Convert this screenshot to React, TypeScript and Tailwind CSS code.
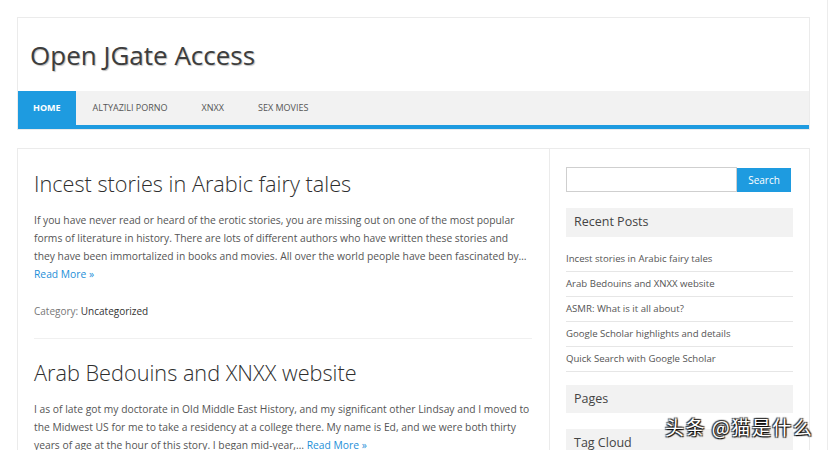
import React from "react";

const FONT = "font-['Open_Sans','DejaVu_Sans',sans-serif]";

const navItems = ["ALTYAZILI PORNO", "XNXX", "SEX MOVIES"];

const recent = [
  "Incest stories in Arabic fairy tales",
  "Arab Bedouins and XNXX website",
  "ASMR: What is it all about?",
  "Google Scholar highlights and details",
  "Quick Search with Google Scholar",
];

function Post({ title, body, readMoreInline, showCategory }: { title: string; body: string; readMoreInline?: boolean; showCategory?: boolean }) {
  return (
    <article>
      <h2 className="text-[21.7px] leading-[30px] font-light text-[#2e2e2e]">{title}</h2>
      <p className="mt-[12px] text-[10.3px] leading-[18px] text-[#555]">
        {body}
        {readMoreInline && <a className="text-[#1e8fd8]"> Read More »</a>}
      </p>
      {!readMoreInline && <p className="text-[10.3px] leading-[18px] text-[#1e8fd8]">Read More »</p>}
      {showCategory && (
        <p className="mt-[19px] text-[10px] leading-[18px] text-[#777]">
          Category: <span className="text-[#333]">Uncategorized</span>
        </p>
      )}
    </article>
  );
}

export default function App() {
  return (
    <div className={`relative w-[830px] h-[450px] overflow-hidden bg-white ${FONT}`}>
      <div className="w-[828px] h-[450px] border-r border-[#ececec] pt-[17px] pl-[17px]">
        {/* header */}
        <header className="w-[793px] border border-[#ebebeb] bg-white">
          <div className="h-[73px] pl-[12px] pt-[20px]">
            <h1 className="text-[26px] leading-[34px] text-[#3d3d3d] [text-shadow:1px_1px_1px_rgba(0,0,0,0.25)]">Open JGate Access</h1>
          </div>
          <nav className="flex h-[38px] bg-[#f2f2f2] border-b-4 border-[#1e9be0]">
            <a className="flex items-center px-[15px] bg-[#1e9be0] text-white text-[9px] font-bold">HOME</a>
            {navItems.map((n) => (
              <a key={n} className="flex items-center px-[17px] text-[9px] text-[#555]">{n}</a>
            ))}
          </nav>
        </header>

        {/* main */}
        <div className="mt-[18px] w-[793px] h-[320px] border border-[#ebebeb] flex">
          <main className="w-[532px] border-r border-[#ebebeb] pl-[16px] pr-[17px] pt-[20px]">
            <div className="w-[494px]">
              <Post
                title="Incest stories in Arabic fairy tales"
                body="If you have never read or heard of the erotic stories, you are missing out on one of the most popular forms of literature in history. There are lots of different authors who have written these stories and they have been immortalized in books and movies. All over the world people have been fascinated by…"
                showCategory
              />
            </div>
            <div className="mt-[18px] border-t border-[#f0f0f0]" />
            <div className="mt-[19px] w-[498px]">
              <Post
                title="Arab Bedouins and XNXX website"
                body="I as of late got my doctorate in Old Middle East History, and my significant other Lindsay and I moved to the Midwest US for me to take a residency at a college there. My name is Ed, and we were both thirty years of age at the hour of this story. I began mid-year,…"
                readMoreInline
              />
            </div>
          </main>
          <aside className="flex-1 pl-[16px] pr-[15px] pt-[18px]">
            <div className="flex">
              <input className="w-[171px] h-[25px] border border-[#cfcfcf] bg-white" />
              <button className="w-[54px] h-[24px] mt-px bg-[#1e9be0] text-white text-[10px]">Search</button>
            </div>
            <div className="mt-[16px] w-[227px] h-[29px] bg-[#f2f2f2] pl-[8px] flex items-center text-[12.5px] text-[#444]">Recent Posts</div>
            <ul className="w-[227px] mt-[10px]">
              {recent.map((r) => (
                <li key={r} className="h-[25px] flex items-center border-b border-[#e6e6e6] text-[9.6px] text-[#555]">{r}</li>
              ))}
            </ul>
            <div className="mt-[13px] w-[227px] h-[28px] bg-[#f2f2f2] pl-[8px] flex items-center text-[12.5px] text-[#444]">Pages</div>
            <div className="mt-[16px] w-[227px] h-[28px] bg-[#f2f2f2] pl-[8px] flex items-center text-[12.5px] text-[#444]">Tag Cloud</div>
          </aside>
        </div>
      </div>

      {/* watermark */}
      <div className="absolute left-[665px] top-[414px] text-[19px] leading-[26px] tracking-[1.5px] text-white font-['Noto_Sans_CJK_SC','Open_Sans',sans-serif] [text-shadow:1px_1px_1px_#000,-1px_-1px_1px_#333,1px_-1px_1px_#333,-1px_1px_1px_#333]">
        头条 @猫是什么
      </div>
    </div>
  );
}
